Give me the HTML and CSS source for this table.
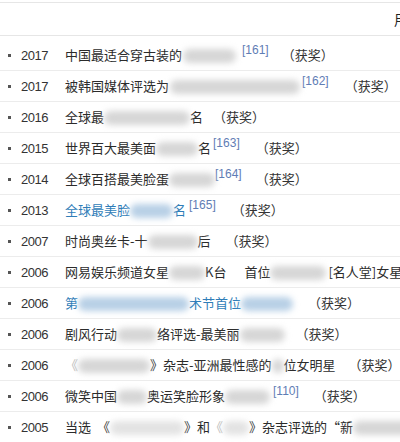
FILE: index.html
```html
<!DOCTYPE html>
<html lang="zh-CN">
<head>
<meta charset="utf-8">
<link rel="stylesheet" href="styles.css">
</head>
<body>
<div class="top"><span>用户</span></div>
<ul class="list">
  <li><i class="dot"></i><span class="year">2017</span><span class="desc">中国最适合穿古装的<span class="bl w53 ml1"></span><sup class="ml6">[161]</sup><span class="aw ml13">（获奖）</span></span></li>
  <li><i class="dot"></i><span class="year">2017</span><span class="desc">被韩国媒体评选为<span class="bl w130 ml1"></span><sup class="ml2">[162]</sup><span class="aw ml16">（获奖）</span></span></li>
  <li><i class="dot"></i><span class="year">2016</span><span class="desc">全球最<span class="bl w86"></span>名<span class="aw ml10">（获奖）</span></span></li>
  <li><i class="dot"></i><span class="year">2015</span><span class="desc">世界百大最美面<span class="bl w42"></span>名<sup class="ml2">[163]</sup><span class="aw ml16">（获奖）</span></span></li>
  <li><i class="dot"></i><span class="year">2014</span><span class="desc">全球百搭最美脸蛋<span class="bl w46"></span><sup>[164]</sup><span class="aw ml14">（获奖）</span></span></li>
  <li><i class="dot"></i><span class="year">2013</span><span class="desc"><span class="link">全球最美脸<span class="bl blue w43"></span>名</span><sup class="ml3">[165]</sup><span class="aw ml16">（获奖）</span></span></li>
  <li><i class="dot"></i><span class="year">2007</span><span class="desc">时尚奥丝卡-十<span class="bl w50"></span>后<span class="aw ml15">（获奖）</span></span></li>
  <li><i class="dot"></i><span class="year">2006</span><span class="desc">网易娱乐频道女星<span class="bl w36"></span>K台<span class="ml18">首位</span><span class="bl w56"></span><span class="ml2">[名人堂]女星</span></span></li>
  <li><i class="dot"></i><span class="year">2006</span><span class="desc"><span class="link">第<span class="bl blue w111"></span>术节首位<span class="bl blue w52"></span></span><span class="aw ml15">（获奖）</span></span></li>
  <li><i class="dot"></i><span class="year">2006</span><span class="desc">剧风行动<span class="bl w40"></span>络评选-最美丽<span class="bl w45"></span><span class="aw ml11">（获奖）</span></span></li>
  <li><i class="dot"></i><span class="year">2006</span><span class="desc"><span class="faint">《</span><span class="bl w72"></span>》杂志-亚洲最性感的<span class="bl w12"></span>位女明星<span class="aw ml13">（获奖）</span></span></li>
  <li><i class="dot"></i><span class="year">2006</span><span class="desc">微笑中国<span class="bl w30"></span>奥运笑脸形象<span class="bl w45"></span><sup class="ml3">[110]</sup><span class="aw ml15">（获奖）</span></span></li>
  <li><i class="dot"></i><span class="year">2005</span><span class="desc">当选<span class="ml6">《</span><span class="bl light w74"></span>》和<span class="faint">《</span><span class="bl light w26"></span>》杂志评选的“新<span class="bl w60"></span></span></li>
</ul>
</body>
</html>
```

FILE: styles.css
```css
html, body {
  margin: 0;
  padding: 0;
  background: #fff;
  overflow: hidden;
  width: 400px;
  height: 442px;
}

body {
  font-family: "Noto Sans CJK SC", "Liberation Sans", sans-serif;
  color: #2b2b2b;
}

.top {
  margin-top: 2px;
  height: 32px;
  border-top: 1px solid #e6e6e6;
  border-bottom: 1px solid #e6e6e6;
  display: flex;
  align-items: center;
  justify-content: flex-end;
  overflow: hidden;
  font-size: 14px;
  color: #222;
}

.top span {
  margin-right: -22px;
}

.list {
  list-style: none;
  margin: 0;
  padding: 4px 0 0;
}

.list li {
  height: 30px;
  border-bottom: 1px solid #ececec;
  display: flex;
  align-items: center;
  white-space: nowrap;
  overflow: hidden;
}

.dot {
  width: 3px;
  height: 3px;
  background: #555;
  margin-left: 8px;
  flex: none;
}

.year {
  margin-left: 10px;
  width: 44px;
  flex: none;
  font-family: "Liberation Sans", sans-serif;
  font-size: 13px;
  letter-spacing: -0.5px;
  color: #333;
}

.desc {
  font-size: 13px;
  line-height: 30px;
  white-space: nowrap;
}

.link {
  color: #2f7db8;
}

.faint {
  color: #bbb;
}

sup {
  font-family: "Liberation Sans", sans-serif;
  font-size: 12px;
  line-height: 0;
  vertical-align: 6px;
  color: #5f7db5;
}

.aw {
  color: #333;
}

.bl {
  display: inline-block;
  height: 14px;
  vertical-align: middle;
  background: #d6d6d6;
  border-radius: 7px;
  filter: blur(3px);
}

.bl.blue {
  background: #b8d0e6;
}

.bl.light {
  background: #e3e3e3;
}

.w12 { width: 12px; }
.w26 { width: 26px; }
.w30 { width: 30px; }
.w36 { width: 36px; }
.w40 { width: 40px; }
.w42 { width: 42px; }
.w43 { width: 43px; }
.w45 { width: 45px; }
.w46 { width: 46px; }
.w50 { width: 50px; }
.w52 { width: 52px; }
.w53 { width: 53px; }
.w56 { width: 56px; }
.w60 { width: 60px; }
.w72 { width: 72px; }
.w74 { width: 74px; }
.w86 { width: 86px; }
.w111 { width: 111px; }
.w130 { width: 130px; }

.ml1 { margin-left: 1px; }
.ml2 { margin-left: 2px; }
.ml3 { margin-left: 3px; }
.ml6 { margin-left: 6px; }
.ml10 { margin-left: 10px; }
.ml11 { margin-left: 11px; }
.ml13 { margin-left: 13px; }
.ml14 { margin-left: 14px; }
.ml15 { margin-left: 15px; }
.ml16 { margin-left: 16px; }
.ml18 { margin-left: 18px; }
```
